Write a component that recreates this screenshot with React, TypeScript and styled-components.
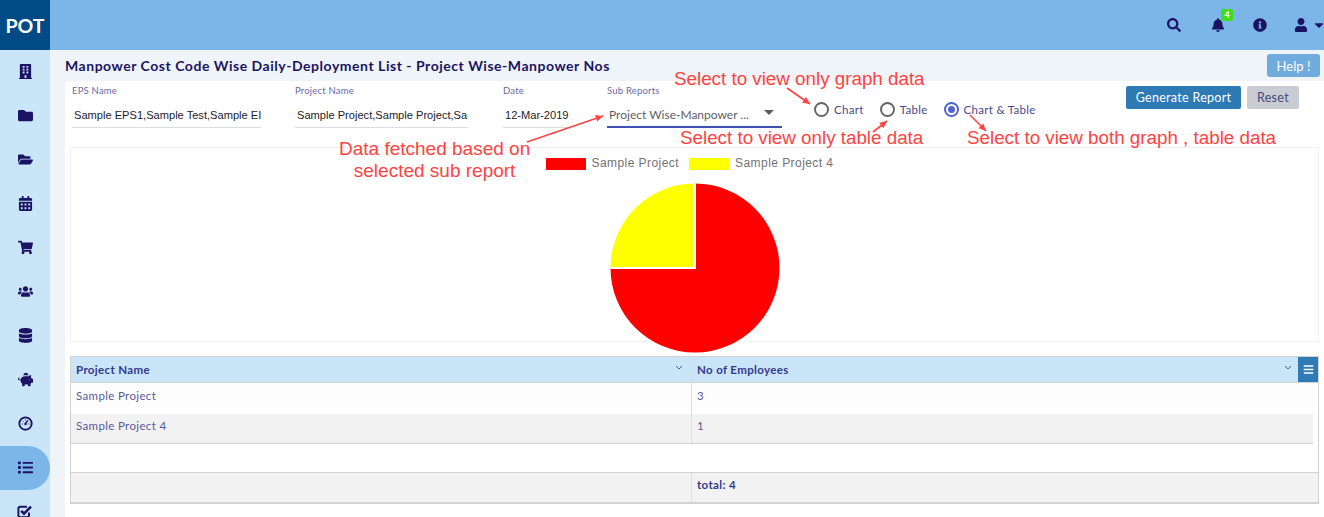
import * as React from 'react';
import styled, { createGlobalStyle } from 'styled-components';
import {
    FaBars,
    FaBell,
    FaBuilding,
    FaCalendarAlt,
    FaCaretDown,
    FaDatabase,
    FaFolder,
    FaFolderOpen,
    FaInfoCircle,
    FaList,
    FaPiggyBank,
    FaSearch,
    FaShoppingCart,
    FaUser,
    FaUsers,
} from 'react-icons/fa';

const Navy = '#1b1464';
const LabelBlue = '#6a68a8';
const SkyBlue = '#7cb6e8';
const PaleBlue = '#cae4f8';
const Annotation = '#ff4343';

const GlobalStyle = createGlobalStyle`
    html, body {
        margin: 0;
        padding: 0;
        height: 517px;
        overflow: hidden;
        background: #fff;
        font-family: Lato, "Liberation Sans", sans-serif;
    }
`;

const Page = styled.div`
    position: relative;
    width: 1324px;
    height: 517px;
    overflow: hidden;
    display: flex;
    flex-direction: column;
`;

const TopBar = styled.header`
    display: flex;
    align-items: center;
    height: 50px;
    flex: none;
    background: ${SkyBlue};
`;

const Logo = styled.div`
    display: flex;
    align-items: center;
    justify-content: center;
    width: 50px;
    height: 50px;
    background: #004b85;
    color: #fff;
    font-size: 19.5px;
    font-weight: 700;
`;

const TopIcons = styled.div`
    margin-left: auto;
    display: flex;
    align-items: center;
    color: ${Navy};
`;

const TopIcon = styled.span<{ $width: number }>`
    position: relative;
    display: flex;
    align-items: center;
    justify-content: center;
    width: ${(props) => props.$width}px;
    font-size: 14px;
`;

const Badge = styled.span`
    position: absolute;
    top: -9px;
    left: 17px;
    width: 12px;
    height: 12px;
    border-radius: 2px;
    background: #3ddc1e;
    color: #fff;
    font-size: 9px;
    font-weight: 700;
    line-height: 12px;
    text-align: center;
`;

const Body = styled.div`
    display: flex;
    flex: 1;
    min-height: 0;
`;

const SideBar = styled.nav`
    width: 50px;
    flex: none;
    background: ${PaleBlue};
`;

const SideItem = styled.div<{ $active?: boolean }>`
    display: flex;
    align-items: center;
    justify-content: center;
    height: 44px;
    box-sizing: border-box;
    padding-bottom: 2px;
    color: ${Navy};
    font-size: 15px;
    background: ${(props) => (props.$active ? SkyBlue : 'transparent')};
    border-radius: ${(props) => (props.$active ? '0 22px 22px 0' : '0')};
`;

const Main = styled.main`
    flex: 1;
    min-width: 0;
    background: #eff4f8;
    padding-left: 15px;
    display: flex;
    flex-direction: column;
`;

const TitleRow = styled.div`
    display: flex;
    align-items: center;
    justify-content: space-between;
    height: 31px;
    flex: none;
    padding-right: 4px;
`;

const Title = styled.h1`
    margin: 0;
    color: ${Navy};
    font-size: 14px;
    font-weight: 700;
    letter-spacing: 0.53px;
`;

const HelpButton = styled.button`
    width: 53px;
    height: 23px;
    border: none;
    border-radius: 3px;
    background: #70abdd;
    color: #fff;
    font-family: inherit;
    font-size: 13px;
    padding: 0;
`;

const Card = styled.section`
    flex: 1;
    background: #fff;
    border-radius: 4px 0 0 0;
    padding: 5px 5px 0;
`;

const FilterRow = styled.div`
    display: flex;
    align-items: flex-start;
    height: 61px;
    padding-left: 2px;
`;

const Field = styled.div<{ $width: number; $gap: number }>`
    width: ${(props) => props.$width}px;
    margin-right: ${(props) => props.$gap}px;
`;

const FieldLabel = styled.div`
    color: ${LabelBlue};
    font-size: 9.5px;
    height: 12px;
    line-height: 12px;
    margin-top: -1px;
    letter-spacing: 0.2px;
`;

const TextValue = styled.div`
    height: 24px;
    margin-top: 7px;
    padding-left: 2px;
    box-sizing: border-box;
    border-bottom: 1px solid #dcdde0;
    font-family: "Liberation Sans", sans-serif;
    font-size: 11.1px;
    line-height: 23px;
    color: #1c1c2c;
    white-space: nowrap;
    overflow: hidden;
`;

const SelectValue = styled.div`
    display: flex;
    align-items: center;
    justify-content: space-between;
    height: 24px;
    margin-top: 7px;
    padding: 0 8px 2px 2px;
    box-sizing: border-box;
    border-bottom: 2px solid #3f51b5;
    color: #5e5e68;
    font-size: 12px;
    white-space: nowrap;
`;

const SelectCaret = styled.span`
    width: 0;
    height: 0;
    margin-bottom: 3px;
    border-left: 5px solid transparent;
    border-right: 5px solid transparent;
    border-top: 5px solid #5c5c5c;
`;

const RadioGroup = styled.div`
    display: flex;
    align-items: center;
    height: 15px;
    margin-top: 16px;
    margin-left: 32px;
`;

const RadioItem = styled.label`
    display: flex;
    align-items: center;
    color: #474a8c;
    font-size: 11.5px;
    letter-spacing: 0.3px;
    margin-right: 16px;
`;

const RadioRing = styled.span<{ $checked?: boolean }>`
    display: flex;
    align-items: center;
    justify-content: center;
    width: 15px;
    height: 15px;
    margin-right: 5px;
    box-sizing: border-box;
    border-radius: 50%;
    border: 2px solid ${(props) => (props.$checked ? '#5362cc' : '#666')};

    &::after {
        content: '';
        width: 7px;
        height: 7px;
        border-radius: 50%;
        background: ${(props) => (props.$checked ? '#5362cc' : 'transparent')};
    }
`;

const Actions = styled.div`
    margin-left: auto;
    margin-right: 20px;
    display: flex;
    gap: 6px;
`;

const ActionButton = styled.button<{ $primary?: boolean }>`
    height: 23px;
    width: ${(props) => (props.$primary ? '115px' : '52px')};
    border: none;
    border-radius: 2px;
    padding: 0;
    background: ${(props) => (props.$primary ? '#2d7ab5' : '#c9ccd2')};
    color: ${(props) => (props.$primary ? '#fff' : '#474a7c')};
    font-family: inherit;
    font-size: 12.5px;
    letter-spacing: 0.3px;
`;

const ChartBox = styled.div`
    height: 193px;
    border: 1px solid #f1f1f1;
    display: flex;
    flex-direction: column;
    align-items: center;
`;

const Legend = styled.div`
    display: flex;
    align-items: center;
    height: 12px;
    margin-top: 9px;
    margin-right: 10px;
    font-family: "Liberation Sans", sans-serif;
    font-size: 12px;
    letter-spacing: 0.44px;
    color: #737373;
`;

const LegendSwatch = styled.span<{ $color: string }>`
    width: 40px;
    height: 12px;
    margin-top: 1px;
    background: ${(props) => props.$color};
    margin-right: 6px;
`;

const LegendLabel = styled.span`
    margin-right: 10px;

    &:last-child {
        margin-right: 0;
    }
`;

const PieSvg = styled.svg`
    display: block;
    flex: none;
    margin-top: 13px;
    overflow: visible;
`;

const Grid = styled.div`
    position: relative;
    margin-top: 14px;
    width: 1249px;
    box-sizing: border-box;
    border: 1px solid #d2d2d2;
    border-bottom-width: 2px;
    font-size: 11.5px;
    letter-spacing: 0.35px;
    color: #5a5a9c;
`;

const GridRow = styled.div<{ $kind: 'head' | 'plain' | 'alt' | 'blank' | 'foot' }>`
    display: grid;
    grid-template-columns: 621px 1fr;
    height: ${(props) => ({ head: 25, plain: 31, alt: 29, blank: 28, foot: 29 })[props.$kind]}px;
    margin-right: ${(props) => (props.$kind === 'plain' || props.$kind === 'alt' ? '5px' : '0')};
    background: ${(props) =>
        ({ head: PaleBlue, plain: '#fdfdfd', alt: '#f2f2f2', blank: '#fff', foot: '#f2f2f2' })[props.$kind]};
    border-bottom: ${(props) => (props.$kind === 'plain' || props.$kind === 'foot' ? 'none' : '1px solid #d2d2d2')};
    font-weight: ${(props) => (props.$kind === 'head' || props.$kind === 'foot' ? 700 : 400)};
    color: ${(props) => (props.$kind === 'head' || props.$kind === 'foot' ? '#343a8c' : '#5a5a9c')};
`;

const GridCell = styled.div<{ $divider?: boolean; $top?: number }>`
    position: relative;
    padding: 0 5px;
    display: flex;
    align-items: ${(props) => (props.$top !== undefined ? 'flex-start' : 'center')};
    padding-top: ${(props) => props.$top ?? 0}px;
    box-sizing: border-box;
    border-right: ${(props) => (props.$divider ? '1px solid #dcdcdc' : 'none')};
`;

const SortChevron = styled.svg<{ $offset: number }>`
    position: absolute;
    top: 8px;
    right: ${(props) => props.$offset}px;
`;

const MenuButton = styled.span`
    position: absolute;
    top: 0;
    right: 0;
    display: flex;
    align-items: center;
    justify-content: center;
    width: 20px;
    height: 25px;
    background: #2d7ab5;
    color: #fff;
    font-size: 11px;
`;

// Handwritten notes pasted over the screenshot
const Note = styled.div<{ $x: number; $y: number; $center?: boolean }>`
    position: absolute;
    left: ${(props) => props.$x}px;
    top: ${(props) => props.$y}px;
    color: ${Annotation};
    font-family: "Liberation Sans", sans-serif;
    font-size: ${(props) => (props.$center ? '19px' : '18.8px')};
    line-height: 22px;
    white-space: nowrap;
    text-align: ${(props) => (props.$center ? 'center' : 'left')};
`;

const NoteLayer = styled.svg`
    position: absolute;
    left: 0;
    top: 0;
    pointer-events: none;
`;

// Round dial with a needle, the icon set only has a filled one
const GaugeIcon: React.FC = () => (
    <svg width="15" height="15" viewBox="0 0 16 16">
        <circle cx="8" cy="8" r="6.6" fill="none" stroke="currentColor" strokeWidth="2" />
        <path d="M8 8l2.6-3.4" stroke="currentColor" strokeWidth="1.5" />
        <path d="M4 8.5h1.2M11 8.5h1.2M8 3.6v1.2M5 5.2l.8.8" stroke="currentColor" strokeWidth="1" />
        <circle cx="8" cy="8.5" r="1.3" fill="currentColor" />
    </svg>
);

// Outlined box with a heavy tick that pokes through the corner
const CheckBoxIcon: React.FC = () => (
    <svg width="16" height="15" viewBox="0 0 16 15">
        <path
            d="M12 8.5V11.5A1.8 1.8 0 0 1 10.2 13.2H3.2A1.8 1.8 0 0 1 1.4 11.5V4.5A1.8 1.8 0 0 1 3.2 2.8H10"
            fill="none"
            stroke="currentColor"
            strokeWidth="2"
        />
        <path d="M4.2 6.8L7 9.6L14 2.6" fill="none" stroke="currentColor" strokeWidth="2.6" />
    </svg>
);

const sideIcons = [
    FaBuilding,
    FaFolder,
    FaFolderOpen,
    FaCalendarAlt,
    FaShoppingCart,
    FaUsers,
    FaDatabase,
    FaPiggyBank,
    GaugeIcon,
    FaList,
    CheckBoxIcon,
];

const arrows = [
    { from: [527, 142], to: [603, 116] },
    { from: [787, 88], to: [810, 104] },
    { from: [873, 132], to: [887, 121] },
    { from: [970, 115], to: [986, 131] },
];

const Arrow: React.FC<{ from: number[]; to: number[] }> = ({ from, to }) => {
    const angle = Math.atan2(to[1] - from[1], to[0] - from[0]);
    const head = (offset: number) =>
        `${to[0] - 8 * Math.cos(angle + offset)},${to[1] - 8 * Math.sin(angle + offset)}`;

    return (
        <g>
            <line x1={from[0]} y1={from[1]} x2={to[0]} y2={to[1]} stroke={Annotation} strokeWidth={1.6} />
            <polygon points={`${to[0]},${to[1]} ${head(0.45)} ${head(-0.45)}`} fill={Annotation} />
        </g>
    );
};

const Chevron: React.FC<{ offset: number }> = ({ offset }) => (
    <SortChevron $offset={offset} width="8" height="5" viewBox="0 0 8 5">
        <path d="M1 1l3 3 3-3" fill="none" stroke="#5a5ab0" strokeWidth="1" />
    </SortChevron>
);

export default function App() {
    return (
        <Page>
            <GlobalStyle />
            <TopBar>
                <Logo>POT</Logo>
                <TopIcons>
                    <TopIcon $width={60}>
                        <FaSearch />
                    </TopIcon>
                    <TopIcon $width={28}>
                        <FaBell />
                        <Badge>4</Badge>
                    </TopIcon>
                    <TopIcon $width={56}>
                        <FaInfoCircle />
                    </TopIcon>
                    <TopIcon $width={26}>
                        <FaUser />
                    </TopIcon>
                    <TopIcon $width={10}>
                        <FaCaretDown />
                    </TopIcon>
                </TopIcons>
            </TopBar>
            <Body>
                <SideBar>
                    {sideIcons.map((Icon, index) => (
                        <SideItem key={index} $active={index === 9}>
                            <Icon />
                        </SideItem>
                    ))}
                </SideBar>
                <Main>
                    <TitleRow>
                        <Title>Manpower Cost Code Wise Daily-Deployment List - Project Wise-Manpower Nos</Title>
                        <HelpButton>Help !</HelpButton>
                    </TitleRow>
                    <Card>
                        <FilterRow>
                            <Field $width={189} $gap={34}>
                                <FieldLabel>EPS Name</FieldLabel>
                                <TextValue>Sample EPS1,Sample Test,Sample EI</TextValue>
                            </Field>
                            <Field $width={173} $gap={35}>
                                <FieldLabel>Project Name</FieldLabel>
                                <TextValue>Sample Project,Sample Project,Sa</TextValue>
                            </Field>
                            <Field $width={67} $gap={37}>
                                <FieldLabel>Date</FieldLabel>
                                <TextValue>12-Mar-2019</TextValue>
                            </Field>
                            <Field $width={175} $gap={0}>
                                <FieldLabel>Sub Reports</FieldLabel>
                                <SelectValue>
                                    Project Wise-Manpower ...
                                    <SelectCaret />
                                </SelectValue>
                            </Field>
                            <RadioGroup>
                                <RadioItem>
                                    <RadioRing />
                                    Chart
                                </RadioItem>
                                <RadioItem>
                                    <RadioRing />
                                    Table
                                </RadioItem>
                                <RadioItem>
                                    <RadioRing $checked />
                                    Chart &amp; Table
                                </RadioItem>
                            </RadioGroup>
                            <Actions>
                                <ActionButton $primary>Generate Report</ActionButton>
                                <ActionButton>Reset</ActionButton>
                            </Actions>
                        </FilterRow>
                        <ChartBox>
                            <Legend>
                                <LegendSwatch $color="#ff0000" />
                                <LegendLabel>Sample Project</LegendLabel>
                                <LegendSwatch $color="#ffff00" />
                                <LegendLabel>Sample Project 4</LegendLabel>
                            </Legend>
                            <PieSvg width="172" height="172" viewBox="-86 -86 172 172">
                                <path d="M0 0V-84.5A84.5 84.5 0 1 1 -84.5 0Z" fill="#ff0000" />
                                <path d="M0 0H-84.5A84.5 84.5 0 0 1 0 -84.5Z" fill="#ffff00" />
                                <path d="M0 -84.5V0H-84.5" fill="none" stroke="#fff" strokeWidth="2" />
                            </PieSvg>
                        </ChartBox>
                        <Grid>
                            <GridRow $kind="head">
                                <GridCell $divider>
                                    Project Name
                                    <Chevron offset={8} />
                                </GridCell>
                                <GridCell>
                                    No of Employees
                                    <Chevron offset={26} />
                                </GridCell>
                            </GridRow>
                            <GridRow $kind="plain">
                                <GridCell $divider $top={6}>
                                    Sample Project
                                </GridCell>
                                <GridCell $top={6}>3</GridCell>
                            </GridRow>
                            <GridRow $kind="alt">
                                <GridCell $divider $top={5}>
                                    Sample Project 4
                                </GridCell>
                                <GridCell $top={5}>1</GridCell>
                            </GridRow>
                            <GridRow $kind="blank" />
                            <GridRow $kind="foot">
                                <GridCell $divider />
                                <GridCell $top={5}>total: 4</GridCell>
                            </GridRow>
                            <MenuButton>
                                <FaBars />
                            </MenuButton>
                        </Grid>
                    </Card>
                </Main>
            </Body>
            <Note $x={674} $y={68}>Select to view only graph data</Note>
            <Note $x={680} $y={127}>Select to view only table data</Note>
            <Note $x={967} $y={127}>Select to view both graph , table data</Note>
            <Note $x={339} $y={138} $center>
                Data fetched based on
                <br />
                selected sub report
            </Note>
            <NoteLayer width="1324" height="517">
                {arrows.map((arrow, index) => (
                    <Arrow key={index} from={arrow.from} to={arrow.to} />
                ))}
            </NoteLayer>
        </Page>
    );
}
